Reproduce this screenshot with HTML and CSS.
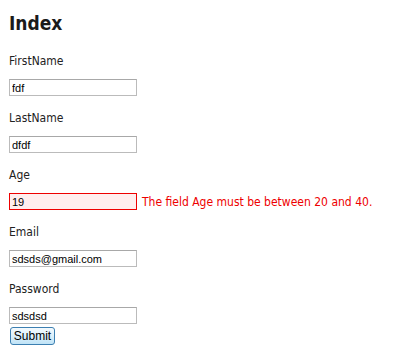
FILE: index.html
```html
<!DOCTYPE html>
<html lang="en">
<head>
    <meta charset="UTF-8">
    <meta name="viewport" content="width=device-width, initial-scale=1.0">
    <title>Index</title>
    <link rel="stylesheet" href="styles.css">
</head>
<body>
    <h2>Index</h2>
    <form id="userForm">
        <div class="editor-label"><label for="FirstName">FirstName</label></div>
        <div class="editor-field"><input type="text" id="FirstName" name="FirstName" value="fdf"></div>

        <div class="editor-label"><label for="LastName">LastName</label></div>
        <div class="editor-field"><input type="text" id="LastName" name="LastName" value="dfdf"></div>

        <div class="editor-label"><label for="Age">Age</label></div>
        <div class="editor-field">
            <input type="text" id="Age" name="Age" value="19" class="input-validation-error">
            <span class="field-validation-error">The field Age must be between 20 and 40.</span>
        </div>

        <div class="editor-label"><label for="Email">Email</label></div>
        <div class="editor-field"><input type="text" id="Email" name="Email" value="sdsds@gmail.com"></div>

        <div class="editor-label"><label for="Password">Password</label></div>
        <div class="editor-field"><input type="text" id="Password" name="Password" value="sdsdsd"></div>

        <div class="actions"><input type="submit" value="Submit" class="btn"></div>
    </form>
</body>
</html>
```

FILE: styles.css
```css
body {
    font-family: "DejaVu Sans Condensed", "Liberation Sans", sans-serif;
    font-size: 12px;
    color: #222;
    background-color: #fff;
    margin: 0;
    padding: 11px 9px;
}
h2 {
    font-size: 19px;
    line-height: 24px;
    font-weight: bold;
    margin: 0;
    padding-bottom: 4px;
    color: #1a1a1a;
}
.editor-label {
    margin-top: 15px;
    line-height: 15px;
}
.editor-field {
    margin-top: 10px;
    display: flex;
    align-items: center;
    gap: 5px;
    height: 17px;
}
.editor-field input {
    box-sizing: border-box;
    width: 128px;
    height: 17px;
    padding: 0 2px;
    margin: 0;
    border: 1px solid #bbb;
    border-top-color: #a8a8a8;
    font-family: "Liberation Sans", Arial, sans-serif;
    font-size: 11px;
    color: #000;
    background: #fff;
}
.editor-field .input-validation-error {
    border: 1px solid #e00;
    background-color: #fee;
}
.field-validation-error {
    color: #e00;
    line-height: 15px;
    padding-top: 2px;
}
.actions {
    margin-top: 3px;
    padding-left: 1px;
}
.btn {
    box-sizing: border-box;
    width: 45px;
    height: 18px;
    padding: 0;
    border: 1px solid #3c7fb1;
    border-radius: 3px;
    background: linear-gradient(#f4fafe, #dcf0fb 50%, #bfe3f7);
    font-family: "Liberation Sans", Arial, sans-serif;
    font-size: 12px;
    color: #000;
}
```
